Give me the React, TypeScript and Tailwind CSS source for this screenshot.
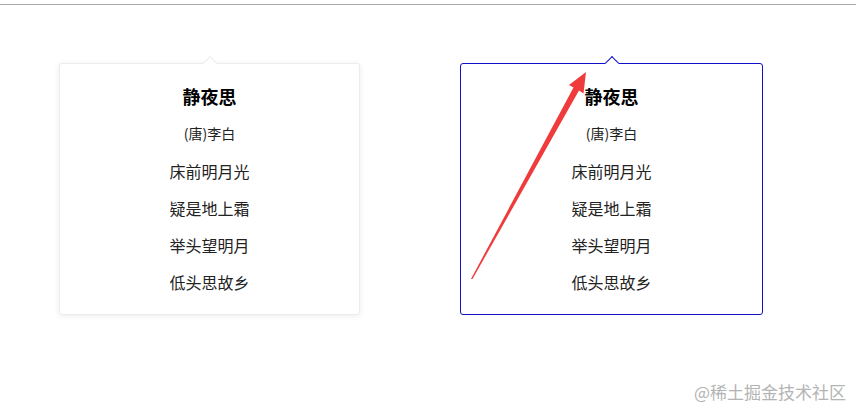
import React from "react";

const lines = ["床前明月光", "疑是地上霜", "举头望明月", "低头思故乡"];

const PoemCard = ({ active }: { active?: boolean }) => {
  return (
    <div
      className={
        active
          ? "relative w-[303px] rounded-[3px] border border-[#1010c8] bg-white pt-[14px] pb-[14px]"
          : "relative w-[301px] rounded-[3px] border border-[#ececec] bg-white pt-[14px] pb-[14px] shadow-[0_1px_6px_rgba(0,0,0,0.08)]"
      }
    >
      {/* caret */}
      <div
        className={
          active
            ? "absolute left-1/2 top-[-6px] h-[10px] w-[10px] -translate-x-1/2 rotate-45 border-l border-t border-[#1010c8] bg-white"
            : "absolute left-1/2 top-[-6px] h-[10px] w-[10px] -translate-x-1/2 rotate-45 border-l border-t border-[#ececec] bg-white"
        }
      />
      <div className="flex h-[37px] items-center justify-center text-[18px] font-bold text-black">静夜思</div>
      <div className="flex h-[37px] items-center justify-center text-[14px] text-[#222]">(唐)李白</div>
      {lines.map((l) => (
        <div key={l} className="flex h-[37px] items-center justify-center text-[16px] text-[#222]">
          {l}
        </div>
      ))}
    </div>
  );
};

export default function App() {
  return (
    <div
      className="relative h-[410px] w-[856px] overflow-hidden bg-white"
      style={{ fontFamily: '"Noto Sans CJK SC", "Noto Sans", sans-serif' }}
    >
      <div className="mt-[4px] border-t border-[#aaaaaa]" />
      <div className="flex gap-[100px] pl-[59px] pt-[58px]">
        <PoemCard />
        <PoemCard active />
      </div>

      {/* annotation arrow */}
      <svg className="pointer-events-none absolute left-0 top-0" width="856" height="410">
        <polygon
          points="471,279 573.5,87.5 569,85 586,72 583.5,93.5 579,90.5 472.5,279"
          fill="#ef3b3b"
        />
      </svg>

      <div className="absolute bottom-[6px] right-[10px] text-[17px] text-[#b4b4b4]">@稀土掘金技术社区</div>
    </div>
  );
}
